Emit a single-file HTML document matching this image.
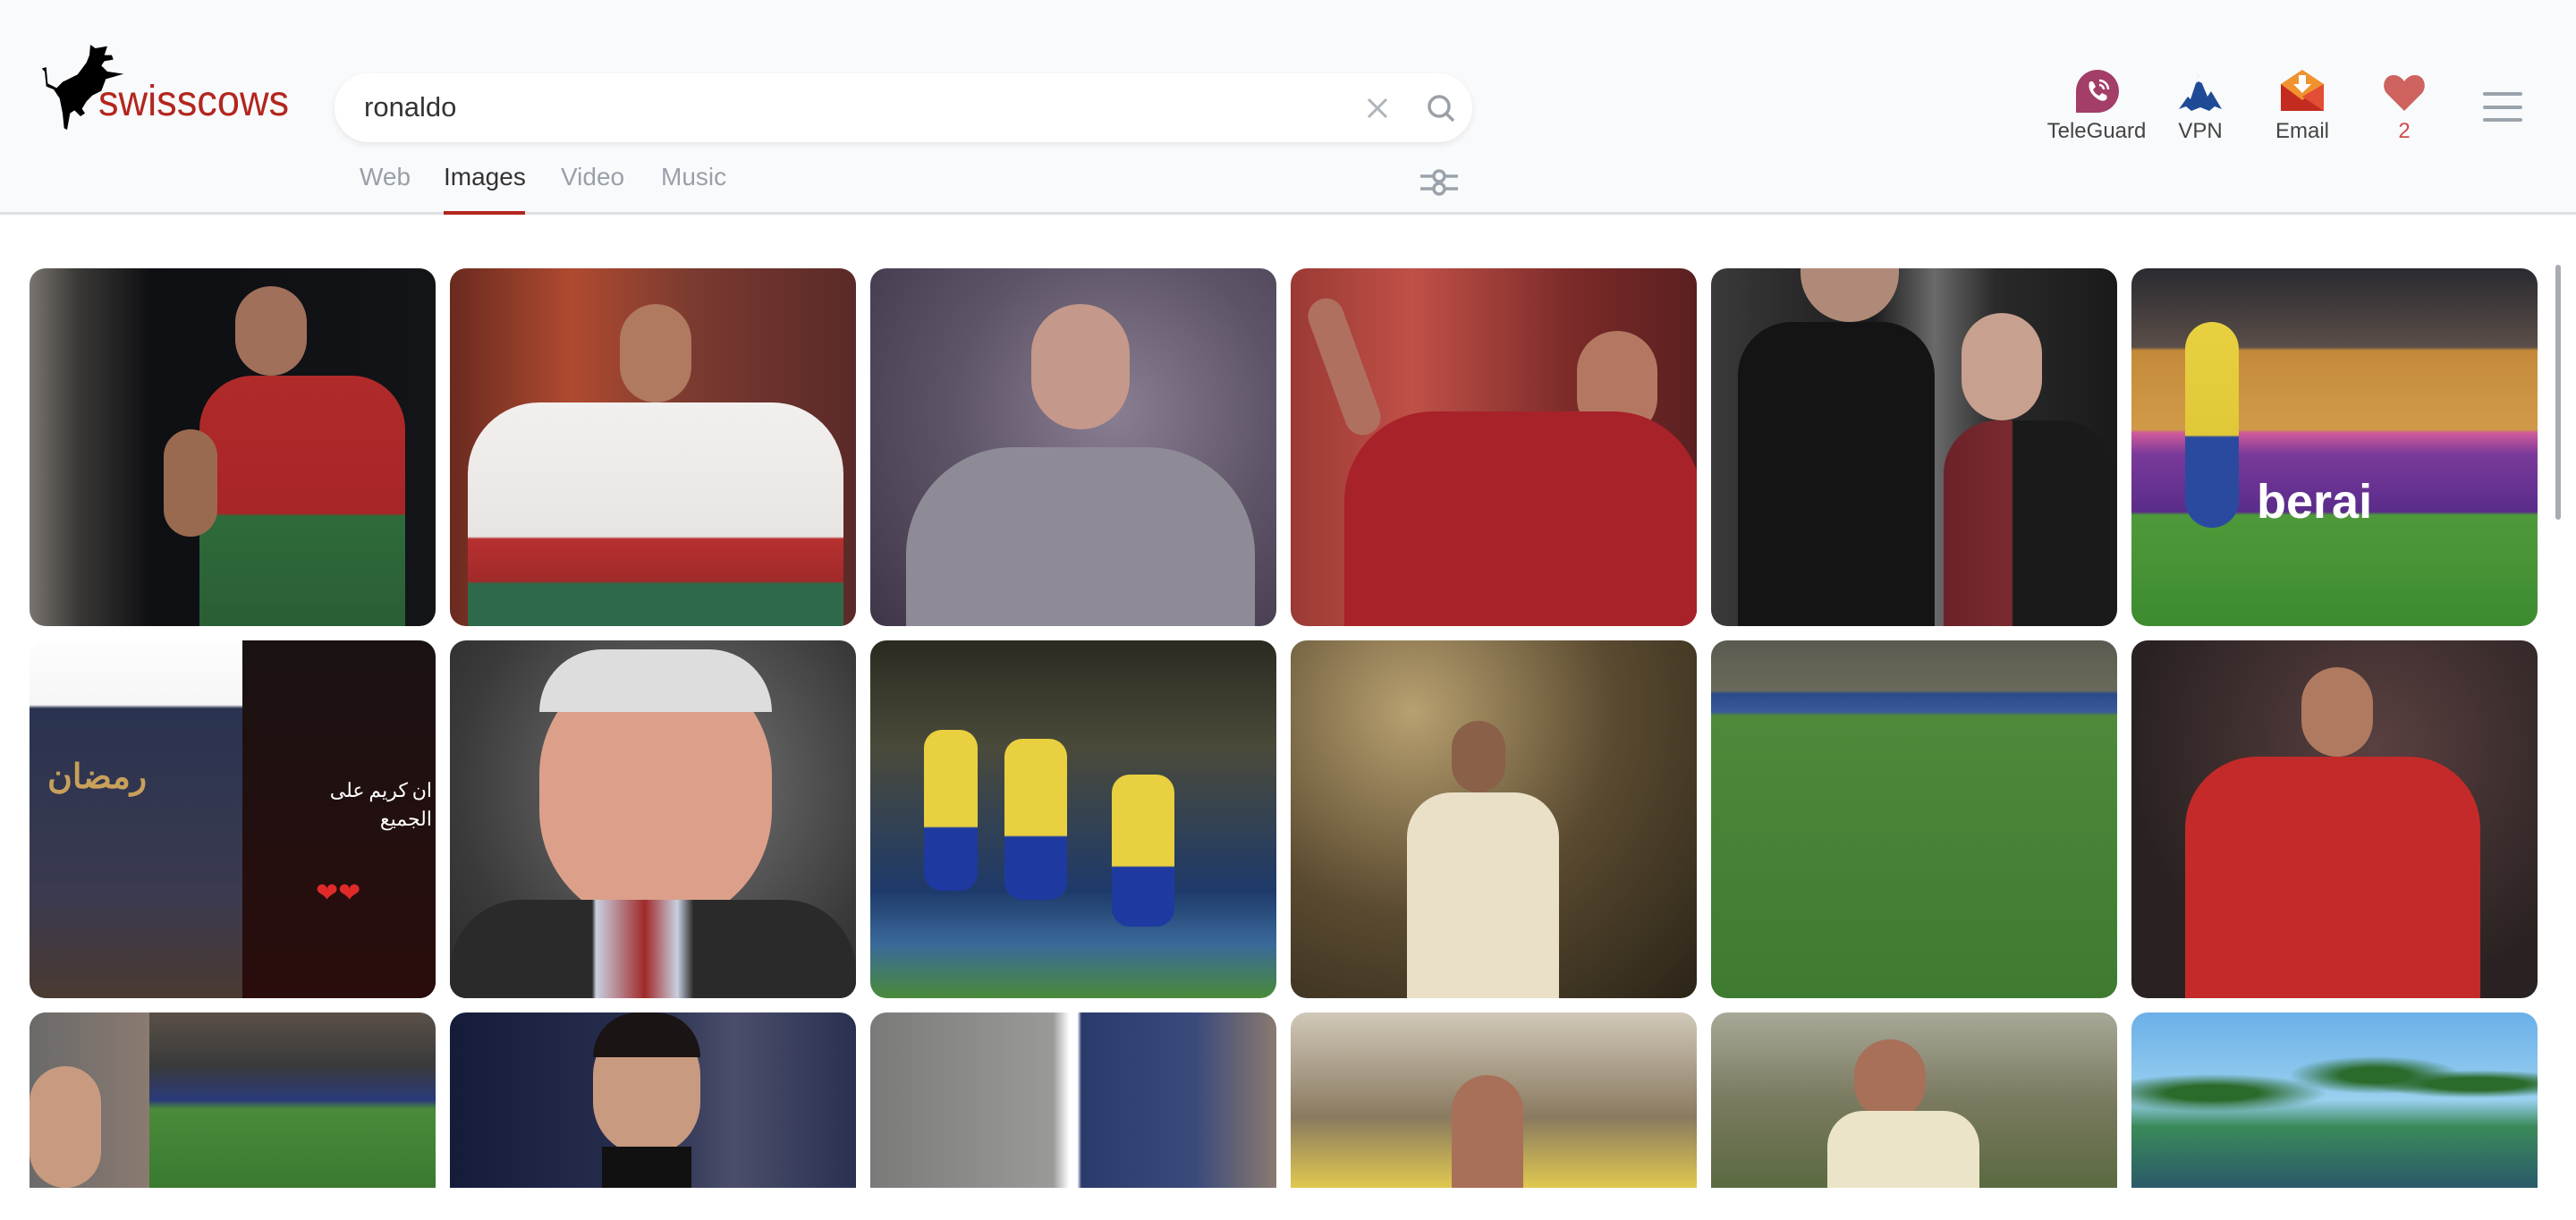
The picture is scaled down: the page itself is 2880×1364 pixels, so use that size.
<!DOCTYPE html>
<html><head><meta charset="utf-8"><style>
*{margin:0;padding:0;box-sizing:border-box}
html,body{width:2880px;height:1364px;overflow:hidden;background:#fff;font-family:"Liberation Sans",sans-serif}
.hdr{position:absolute;left:0;top:0;width:2880px;height:240px;background:#f9fafc;border-bottom:3px solid #e0e1e7}
.logo{position:absolute;left:20px;top:30px;width:330px;height:130px}
.logotext{position:absolute;left:110px;top:86px;font-size:48px;color:#b3261e;letter-spacing:0px;transform:scaleX(0.94);transform-origin:left}
.search{position:absolute;left:374px;top:82px;width:1272px;height:77px;background:#fff;border-radius:40px;box-shadow:0 3px 8px rgba(0,0,0,0.08)}
.search .q{position:absolute;left:33px;top:20px;font-size:31px;color:#333}
.tab{position:absolute;top:182px;font-size:28px;color:#9aa0a8}
.tab.on{color:#333}
.ul{position:absolute;left:496px;top:236px;width:91px;height:4px;background:#b3261e}
.ic{position:absolute;top:78px;width:48px;height:48px}
.lbl{position:absolute;top:133px;font-size:24px;color:#444;text-align:center;width:140px}
.hb{position:absolute;left:2776px;width:44px;height:4px;border-radius:2px;background:#9aa3ab}
.t{position:absolute;width:454px;border-radius:18px;overflow:hidden}
.sb{position:absolute;left:2857px;top:296px;width:6px;height:285px;border-radius:3px;background:#a8acb1}
</style></head><body>
<div class="hdr">
<svg class="logo" viewBox="0 0 990 390"><path fill="#000" d="M80,140 L95,135 100,190 130,205 150,185 200,160 230,120 240,95 243,60 260,72 300,65 290,95 315,95 320,110 290,115 280,130 300,150 355,158 330,165 295,175 280,215 250,230 230,250 215,275 225,290 210,300 190,280 175,290 165,345 155,340 150,290 140,240 120,210 95,200 90,150 Z"/></svg>
<div class="logotext">swisscows</div>
<div class="search"><div class="q">ronaldo</div>
<svg style="position:absolute;left:1153px;top:26px" width="26" height="26" viewBox="0 0 26 26"><path d="M3 3L23 23M23 3L3 23" stroke="#b0b5bb" stroke-width="3"/></svg>
<svg style="position:absolute;left:1220px;top:22px" width="34" height="34" viewBox="0 0 34 34"><circle cx="15" cy="15" r="11" fill="none" stroke="#9aa0a8" stroke-width="3.5"/><path d="M23 23L31 31" stroke="#9aa0a8" stroke-width="3.5"/></svg>
</div>
<div class="tab" style="left:402px">Web</div>
<div class="tab on" style="left:496px">Images</div>
<div class="tab" style="left:627px">Video</div>
<div class="tab" style="left:739px">Music</div>
<div class="ul"></div>
<svg style="position:absolute;left:1586px;top:186px" width="46" height="36" viewBox="0 0 46 36"><path d="M2 11H44M2 25H44" stroke="#9aa3ab" stroke-width="3.5"/><circle cx="23" cy="11" r="6" fill="#f9fafc" stroke="#9aa3ab" stroke-width="3.5"/><circle cx="23" cy="25" r="6" fill="#f9fafc" stroke="#9aa3ab" stroke-width="3.5"/></svg>
<svg class="ic" style="left:2321px" viewBox="0 0 48 48"><path d="M24 0A24 24 0 1 1 24 48H0V24A24 24 0 0 1 24 0Z" fill="#a33e68"/><path d="M15 14c2-2 4-1 5 1l2 4-3 3c1 3 4 6 7 7l3-3 4 2c2 1 2 3 1 5-3 3-7 2-12-2-5-4-9-10-7-17z" fill="#fff"/><path d="M26 12a10 10 0 0 1 10 10M26 17a5 5 0 0 1 5 5" stroke="#fff" stroke-width="2.5" fill="none"/></svg>
<div class="lbl" style="left:2274px">TeleGuard</div>
<svg class="ic" style="left:2436px" viewBox="0 0 48 48"><path d="M0 44L10 30 13 33 22 6 32 30 36 24 48 44 40 41 34 46 24 42 14 46 8 41Z" fill="#1f4b96"/><path d="M19 15L22 6 26 15 22 13Z" fill="#fff"/></svg>
<div class="lbl" style="left:2390px">VPN</div>
<svg class="ic" style="left:2550px" viewBox="0 0 48 48"><path d="M0 16L24 0 48 16V46H0Z" fill="#f0922e"/><path d="M0 16L24 34 48 16V46H0Z" fill="#c42b20"/><path d="M48 16V46L24 30Z" fill="#e24d35"/><path d="M20 6H28V16H34L24 26 14 16H20Z" fill="#fff"/></svg>
<div class="lbl" style="left:2504px">Email</div>
<svg class="ic" style="left:2664px;top:80px" viewBox="0 0 48 44"><path d="M24 42L4 22C-2 14 2 2 12 2 18 2 22 6 24 9 26 6 30 2 36 2 46 2 50 14 44 22Z" fill="#cd625e"/></svg>
<div class="lbl" style="left:2618px;color:#cd4b4b">2</div>
<div class="hb" style="top:103px"></div><div class="hb" style="top:118px"></div><div class="hb" style="top:132px"></div>
</div>
<div class="sb"></div>

<!-- row 1 -->
<div class="t" style="left:33px;top:300px;height:400px;background:linear-gradient(90deg,#7a7570 0,#3a3836 12%,#0e0f12 30%,#121418 100%)"><div style="position:absolute;left:230px;top:20px;width:80px;height:100px;border-radius:40px;background:#a0705a"></div><div style="position:absolute;left:190px;top:120px;width:230px;height:280px;border-radius:60px 60px 0 0;background:linear-gradient(180deg,#b02a2a 0,#a82528 55%,#2e6b3a 56%,#2a5e35 100%)"></div><div style="position:absolute;left:150px;top:180px;width:60px;height:120px;border-radius:30px;background:#9a6a50"></div></div>
<div class="t" style="left:503px;top:300px;height:400px;background:linear-gradient(90deg,#6a2a20,#b04a30 30%,#7a3a30 60%,#5a2a28)"><div style="position:absolute;left:190px;top:40px;width:80px;height:110px;border-radius:40px;background:#b07a60"></div><div style="position:absolute;left:20px;top:150px;width:420px;height:250px;border-radius:80px 80px 0 0;background:linear-gradient(180deg,#f2f0ee 0,#e8e4e2 60%,#b83030 61%,#a02a2a 80%,#2e6a4a 81%)"></div></div>
<div class="t" style="left:973px;top:300px;height:400px;background:radial-gradient(circle at 60% 40%,#8a7e92,#5e5468 50%,#3e3648)"><div style="position:absolute;left:180px;top:40px;width:110px;height:140px;border-radius:55px;background:#c4988a"></div><div style="position:absolute;left:40px;top:200px;width:390px;height:200px;border-radius:120px 120px 0 0;background:#8e8a96"></div></div>
<div class="t" style="left:1443px;top:300px;height:400px;background:linear-gradient(90deg,#9a3a34,#c05048 30%,#7a2a28 70%,#5a2020)"><div style="position:absolute;left:320px;top:70px;width:90px;height:120px;border-radius:45px;background:#b47862"></div><div style="position:absolute;left:40px;top:30px;width:40px;height:160px;border-radius:20px;background:#b07060;transform:rotate(-20deg)"></div><div style="position:absolute;left:60px;top:160px;width:400px;height:240px;border-radius:100px 100px 0 0;background:#a8222a"></div></div>
<div class="t" style="left:1913px;top:300px;height:400px;background:linear-gradient(90deg,#3a3a3a,#1c1c1e 40%,#6a6a6a 55%,#2a2a2a 70%,#1a1a1a)"><div style="position:absolute;left:100px;top:0;width:110px;height:60px;border-radius:0 0 55px 55px;background:#b08a78"></div><div style="position:absolute;left:30px;top:60px;width:220px;height:340px;border-radius:60px 60px 0 0;background:#141414"></div><div style="position:absolute;left:280px;top:50px;width:90px;height:120px;border-radius:45px;background:#c8a090"></div><div style="position:absolute;left:260px;top:170px;width:190px;height:230px;border-radius:60px 60px 0 0;background:linear-gradient(90deg,#6a2228 0,#7a2a30 40%,#1a1a1a 41%)"></div></div>
<div class="t" style="left:2383px;top:300px;height:400px;background:linear-gradient(180deg,#2a2a30 0,#5a4e48 22%,#c48a3a 23%,#d09a48 45%,#d05a9a 46%,#7a3a9a 52%,#5a2c8a 68%,#4e9a3a 69%,#3e8a30 100%)"><div style="position:absolute;left:60px;top:60px;width:60px;height:230px;border-radius:30px;background:linear-gradient(180deg,#e8d040 0,#e0c838 55%,#2a4aa0 56%)"></div><div style="position:absolute;left:140px;top:230px;width:300px;height:60px;font:bold 54px 'Liberation Sans',sans-serif;color:#fff">berai</div></div>
<!-- row 2 -->
<div class="t" style="left:33px;top:716px;height:400px;background:linear-gradient(180deg,#fdfdfd 0,#f6f6f6 18%,#2a3350 19%,#3a3a50 70%,#4a3a30 100%)"><div style="position:absolute;left:238px;top:0;width:216px;height:400px;background:linear-gradient(180deg,#1a1212,#2a0c0c)"></div><div style="position:absolute;left:280px;top:150px;width:170px;height:60px;color:#fff;font-size:22px;text-align:right;font-family:'Noto Sans CJK SC',sans-serif">ان كريم على الجميع</div><div style="position:absolute;left:320px;top:265px;font-size:30px;color:#e02a2a">❤❤</div><div style="position:absolute;left:20px;top:130px;color:#c8a05a;font-size:38px;font-weight:bold">رمضان</div></div>
<div class="t" style="left:503px;top:716px;height:400px;background:radial-gradient(circle at 55% 40%,#7a7a7a,#3a3a3a 70%,#2a2a2a)"><div style="position:absolute;left:100px;top:20px;width:260px;height:300px;border-radius:130px;background:#dca08a"></div><div style="position:absolute;left:100px;top:10px;width:260px;height:70px;border-radius:130px 130px 0 0;background:#ddd"></div><div style="position:absolute;left:0;top:290px;width:454px;height:110px;border-radius:80px 80px 0 0;background:linear-gradient(90deg,#2a2a2a 0,#2a2a2a 35%,#c8d0e0 36%,#a02a2a 48%,#c8d0e0 56%,#2a2a2a 60%)"></div></div>
<div class="t" style="left:973px;top:716px;height:400px;background:linear-gradient(180deg,#2a2a20 0,#4a4a3a 30%,#1e3a6a 70%,#3a6a9a 85%,#4a8a3a 100%)"><div style="position:absolute;left:60px;top:100px;width:60px;height:180px;border-radius:20px;background:linear-gradient(180deg,#e8d040 60%,#1e3aa0 61%)"></div><div style="position:absolute;left:150px;top:110px;width:70px;height:180px;border-radius:20px;background:linear-gradient(180deg,#e8d040 60%,#1e3aa0 61%)"></div><div style="position:absolute;left:270px;top:150px;width:70px;height:170px;border-radius:20px;background:linear-gradient(180deg,#e8d040 60%,#1e3aa0 61%)"></div></div>
<div class="t" style="left:1443px;top:716px;height:400px;background:radial-gradient(circle at 30% 20%,#b8a070,#5a4a30 50%,#2a2418)"><div style="position:absolute;left:180px;top:90px;width:60px;height:80px;border-radius:30px;background:#8a6048"></div><div style="position:absolute;left:130px;top:170px;width:170px;height:230px;border-radius:50px 50px 0 0;background:#eae0c8"></div></div>
<div class="t" style="left:1913px;top:716px;height:400px;background:linear-gradient(180deg,#5a5a50 0,#6a6a5a 14%,#2a4a8a 15%,#3a5a9a 20%,#4e8a3a 21%,#3e7a30 100%)"></div>
<div class="t" style="left:2383px;top:716px;height:400px;background:radial-gradient(circle at 60% 30%,#5a4040,#2a2222 70%)"><div style="position:absolute;left:190px;top:30px;width:80px;height:100px;border-radius:40px;background:#b07a60"></div><div style="position:absolute;left:60px;top:130px;width:330px;height:270px;border-radius:80px 80px 0 0;background:#c42a2a"></div></div>
<!-- row 3 -->
<div class="t" style="left:33px;top:1132px;height:196px;border-radius:18px 18px 0 0;background:linear-gradient(180deg,#5a5048 0,#3a3a3a 30%,#2a3a7a 50%,#4a8a3a 55%,#3a7a30 100%)"><div style="position:absolute;left:0;top:0;width:134px;height:196px;background:linear-gradient(90deg,#6a6a6a,#8a7a70)"></div><div style="position:absolute;left:0;top:60px;width:80px;height:136px;border-radius:40px;background:#c89a80"></div></div>
<div class="t" style="left:503px;top:1132px;height:196px;border-radius:18px 18px 0 0;background:linear-gradient(90deg,#141c3a,#2a3050 50%,#4a4e6a 70%,#2a3050)"><div style="position:absolute;left:160px;top:10px;width:120px;height:150px;border-radius:60px;background:#c89a80"></div><div style="position:absolute;left:160px;top:0;width:120px;height:50px;border-radius:60px 60px 0 0;background:#1a1414"></div><div style="position:absolute;left:170px;top:150px;width:100px;height:50px;background:#111"></div></div>
<div class="t" style="left:973px;top:1132px;height:196px;border-radius:18px 18px 0 0;background:linear-gradient(90deg,#7a7a78 0,#9a9a98 45%,#fff 49%,#fff 51%,#2a3a6a 52%,#3a4a7a 80%,#8a7a70 100%)"></div>
<div class="t" style="left:1443px;top:1132px;height:196px;border-radius:18px 18px 0 0;background:linear-gradient(180deg,#d0c8b8,#8a7a60 60%,#e0c850)"><div style="position:absolute;left:180px;top:70px;width:80px;height:126px;border-radius:40px 40px 0 0;background:#a87058"></div></div>
<div class="t" style="left:1913px;top:1132px;height:196px;border-radius:18px 18px 0 0;background:linear-gradient(180deg,#a8a898,#7a7a60 50%,#5a6a40)"><div style="position:absolute;left:160px;top:30px;width:80px;height:90px;border-radius:40px;background:#a87058"></div><div style="position:absolute;left:130px;top:110px;width:170px;height:90px;border-radius:40px 40px 0 0;background:#ece4c8"></div></div>
<div class="t" style="left:2383px;top:1132px;height:196px;border-radius:18px 18px 0 0;background:linear-gradient(180deg,#6ab0e8 0,#9ad0f0 50%,#3a8a5a 65%,#2a5a6a 100%)"><div style="position:absolute;left:0;top:30px;width:454px;height:100px;background:radial-gradient(ellipse at 20% 60%,#2a6a2a 10%,transparent 25%),radial-gradient(ellipse at 60% 40%,#2a6a2a 10%,transparent 25%),radial-gradient(ellipse at 85% 50%,#2a6a2a 10%,transparent 22%)"></div></div>
</body></html>
